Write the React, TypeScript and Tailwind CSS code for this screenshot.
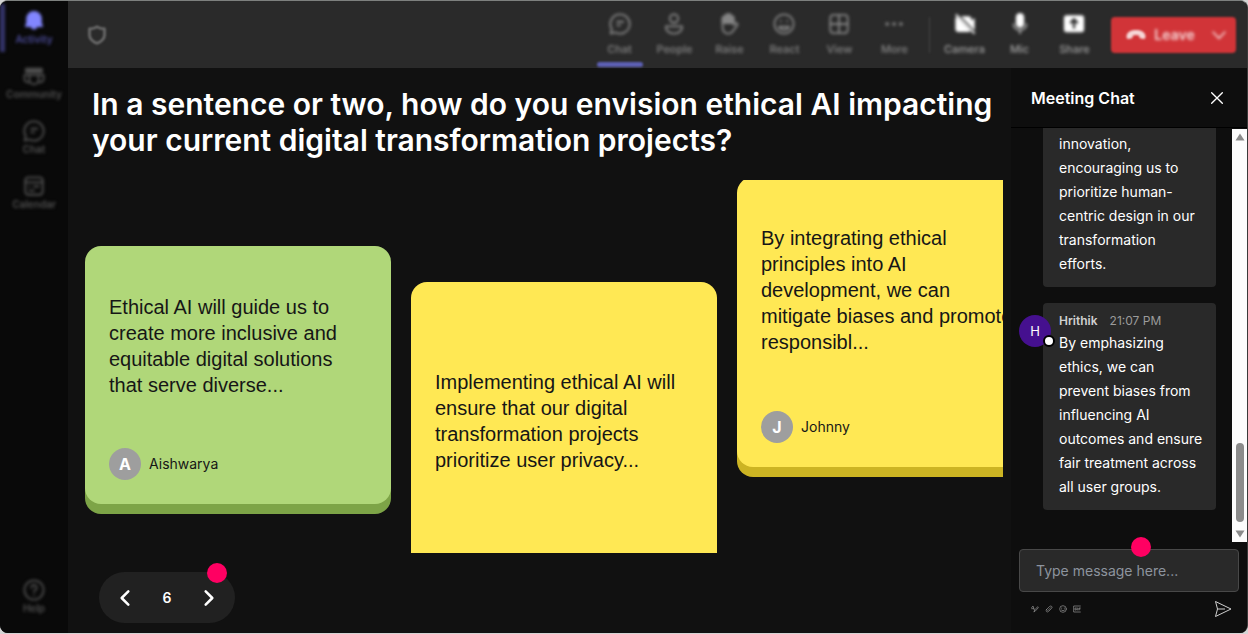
import type { ReactNode } from "react";

type Item = { label: string; icon: ReactNode; active?: boolean };

const Stroke = ({ children, className = "size-[22px]", width = 2 }: { children: ReactNode; className?: string; width?: number }) => (
  <svg
    viewBox="0 0 24 24"
    className={className}
    fill="none"
    stroke="currentColor"
    strokeWidth={width}
    strokeLinecap="round"
    strokeLinejoin="round"
    aria-hidden="true"
  >
    {children}
  </svg>
);

const chatIcon = (
  <Stroke>
    <path d="M12 1.500a10.500 10.500 0 1 1-5 19.700L1.800 22.500l1.200-5A10.500 10.500 0 0 1 12 1.500z" />
    <path d="M9 9.500h6.500M9 13.500h3" />
  </Stroke>
);

const sideItems: Item[] = [
  {
    label: "Activity",
    active: true,
    icon: (
      <svg viewBox="0 0 24 24" className="size-[22px]" fill="currentColor" aria-hidden="true">
        <path d="M12 1a8.500 8.500 0 0 0-8.500 8.500v4.500L2 18.500h6.500a3.600 3.600 0 0 0 7 0H22L20.500 14V9.500A8.500 8.500 0 0 0 12 1z" />
      </svg>
    ),
  },
  {
    label: "Community",
    icon: (
      <Stroke>
        <path d="M3 3.500h18v5H3z" fill="currentColor" strokeWidth="1" />
        <path d="M7 11h10v5a5 5 0 0 1-10 0zM7 11H1.500v4a4 4 0 0 0 5.500 3.700M17 11h5.500v4a4 4 0 0 1-5.500 3.700" />
      </Stroke>
    ),
  },
  { label: "Chat", icon: chatIcon },
  {
    label: "Calendar",
    icon: (
      <Stroke>
        <rect x="2.500" y="2.500" width="19" height="19" rx="3.500" />
        <path d="M2.500 8h19M7 12.500h.1M12 12.500h5M7 17h5" />
      </Stroke>
    ),
  },
];

const meetingItems: Item[] = [
  { label: "Chat", active: true, icon: chatIcon },
  {
    label: "People",
    icon: (
      <Stroke>
        <circle cx="12" cy="6" r="4.600" />
        <path d="M3 14.500h18c0 5-4 8-9 8s-9-3-9-8z" />
      </Stroke>
    ),
  },
  {
    label: "Raise",
    icon: (
      <Stroke>
        <path d="M5 13V5.500a1.500 1.500 0 0 1 3 0V3a1.500 1.500 0 0 1 3 0V2.500a1.500 1.500 0 0 1 3 0V5a1.500 1.500 0 0 1 3 0v8l2-2a1.700 1.700 0 0 1 2 2.500l-5 6.500c-3 4-11 3.500-11-5z" />
        <path d="M5 5.500L8 3l3-1.500L17 5v6H5z" fill="currentColor" />
      </Stroke>
    ),
  },
  {
    label: "React",
    icon: (
      <Stroke>
        <circle cx="12" cy="12" r="10.500" />
        <path d="M8.500 8.500v.5M15.500 8.500v.5M6.500 15h11c-1.500 4.500-9.500 4.500-11 0z" />
      </Stroke>
    ),
  },
  {
    label: "View",
    icon: (
      <Stroke>
        <rect x="2.500" y="2" width="19" height="20" rx="3.500" />
        <path d="M12 2v20M2.500 12h19" />
      </Stroke>
    ),
  },
  {
    label: "More",
    icon: (
      <Stroke width={4}>
        <path d="M4.500 12h.1M12 12h.1M19.500 12h.1" />
      </Stroke>
    ),
  },
];

const deviceItems: Item[] = [
  {
    label: "Camera",
    icon: (
      <svg viewBox="0 0 24 24" className="size-[22px]" fill="currentColor" aria-hidden="true">
        <path d="M3 4l15 15.500c-.7.900-1.400 1.200-2.500 1.200H5a3.500 3.500 0 0 1-3.500-3.500V7c0-1.400.5-2.300 1.500-3zM8 3.500h7.500A3.500 3.500 0 0 1 19 7v1.500l3.500-3v13.500L8 4z" />
        <path d="M2 1.500l20.500 21" stroke="currentColor" strokeWidth="2" />
      </svg>
    ),
  },
  {
    label: "Mic",
    icon: (
      <svg viewBox="0 0 24 24" className="size-[22px]" fill="currentColor" aria-hidden="true">
        <rect x="7.500" y="0" width="9" height="16" rx="4.500" />
        <path d="M5 11.500c0 9.500 14 9.500 14 0M12 19v4" fill="none" stroke="currentColor" strokeWidth="2" opacity="0.6" />
      </svg>
    ),
  },
  {
    label: "Share",
    icon: (
      <svg viewBox="0 0 24 24" className="size-[22px]" fill="currentColor" aria-hidden="true">
        <rect x="1" y="2.500" width="22" height="18.500" rx="3" />
        <path d="M12 17V7.500M8 11l4-4 4 4" fill="none" stroke="#2a2a2a" strokeWidth="2.500" />
      </svg>
    ),
  },
];

const notes = [
  {
    text: "Ethical AI will guide us to create more inclusive and equitable digital solutions that serve diverse...",
    author: "Aishwarya",
    className: "mt-[66px] min-h-[258px] bg-[#b0d779] shadow-[0_10px_0_#7da447]",
    textClass: "pt-12",
  },
  {
    text: "Implementing ethical AI will ensure that our digital transformation projects prioritize user privacy...",
    author: null,
    className: "mt-[102px] min-h-[290px] bg-[#ffe854] shadow-[0_10px_0_#ccb423]",
    textClass: "pt-[87px]",
  },
  {
    text: "By integrating ethical principles into AI development, we can mitigate biases and promote responsibl...",
    author: "Johnny",
    className: "-mt-[3px] min-h-[290px] bg-[#ffe854] shadow-[0_10px_0_#ccb423]",
    textClass: "pt-12",
  },
];

const Sidebar = () => (
  <nav className="flex w-[68px] shrink-0 flex-col justify-between bg-[#090909] pt-[7px] pb-[18px] text-[#505050]">
    <div className="flex flex-col blur-[1px]">
      {sideItems.map((item) => (
        <button
          key={item.label}
          type="button"
          className={`relative flex h-[55px] flex-col items-center pt-[2px] blur-[1px] ${item.active ? "text-[#8286ff]" : ""}`}
        >
          {item.active && <span className="absolute -top-1 left-0 h-12 w-[5px] bg-[#34346a]" />}
          {item.icon}
          <span className={`text-[10px] leading-[14px] font-semibold ${item.active ? "text-[#4b4b98]" : ""}`}>{item.label}</span>
        </button>
      ))}
    </div>
    <div className="flex flex-col blur-[1px]">
      <button type="button" className="flex flex-col items-center blur-[1px]">
        <Stroke>
          <circle cx="12" cy="12" r="10.500" />
          <path d="M9 9.500a3 3 0 1 1 4.500 2.700c-1 .5-1.500 1-1.500 2M12 17.500v.1" />
        </Stroke>
        <span className="text-[10px] leading-[14px] font-semibold">Help</span>
      </button>
    </div>
  </nav>
);

const ToolButton = ({ item, bright }: { item: Item; bright?: boolean }) => (
  <button
    type="button"
    className={`relative flex h-full w-[55px] flex-col items-center pt-3 ${bright ? "text-white" : "text-[#858585]"}`}
  >
    <span className="flex flex-col items-center gap-[6px] blur-[1px]">
      {item.icon}
      <span className={`text-[11px] leading-4 font-medium ${bright ? "text-[#a0a0a0]" : ""}`}>{item.label}</span>
    </span>
    {item.active && <span className="absolute bottom-px h-[5px] w-[46px] rounded-full bg-[#5d60b5]" />}
  </button>
);

const Toolbar = () => (
  <header className="h-[67px] shrink-0 bg-[#2a2a2a]">
    <div className="flex h-full items-center pr-[11px] pl-[19px] blur-[1px]">
      <Stroke className="size-5 text-[#707070]" width={3}>
        <path d="M12 2c3 2 6 2.500 9 2.500v7.500c0 5-4 8-9 10-5-2-9-5-9-10V4.500C6 4.500 9 4 12 2z" />
      </Stroke>
      <div className="ml-auto flex h-full">
        {meetingItems.map((item) => (
          <ToolButton key={item.label} item={item} />
        ))}
      </div>
      <span className="mx-[7px] h-9 w-px bg-[#444]" />
      <div className="flex h-full">
        {deviceItems.map((item) => (
          <ToolButton key={item.label} item={item} bright />
        ))}
      </div>
      <button type="button" className="ml-[9px] flex h-9 w-[125px] items-center justify-between rounded bg-[#d13438] pr-2 pl-[14px] text-white/80">
        <svg viewBox="0 0 24 24" className="size-[22px]" fill="currentColor" aria-hidden="true">
          <path d="M12 6.500c5 0 9.500 2 10.300 6 .3 2-.3 4-1.800 3.800l-3.400-.6c-1.300-.3-1.500-1.200-1.800-3.200-2-.8-4.600-.8-6.600 0-.3 2-.5 2.900-1.800 3.200l-3.400.6C2 16.500 1.400 14.500 1.700 12.500c.8-4 5.300-6 10.300-6z" />
        </svg>
        <span className="text-sm font-semibold blur-[1px]">Leave</span>
        <Stroke className="ml-2 size-[18px] blur-[1px]">
          <path d="M4 8l8 8.500L20 8" />
        </Stroke>
      </button>
    </div>
  </header>
);

const Board = () => (
  <main className="flex min-w-0 flex-1 flex-col pb-[10px]">
    <h1 className="pt-[18px] pr-3 pl-6 text-[30px] leading-9 font-semibold text-white">
      In a sentence or two, how do you envision ethical AI impacting your current digital transformation projects?
    </h1>
    <div className="mt-[22px] mr-2 ml-[17px] flex min-h-0 flex-1 items-start gap-5 overflow-hidden">
      {notes.map((note) => (
        <article
          key={note.text}
          className={`flex w-[306px] shrink-0 flex-col rounded-2xl px-6 pb-6 text-[#161616] ${note.className}`}
        >
          <p className={`font-['Liberation_Sans',Arial,sans-serif] text-xl leading-[26px] ${note.textClass}`}>{note.text}</p>
          {note.author && (
            <div className="mt-auto flex items-center gap-2">
              <span className="flex size-8 items-center justify-center rounded-full bg-[#9e9e9e] text-base font-bold text-white">
                {note.author[0]}
              </span>
              <span className="text-sm">{note.author}</span>
            </div>
          )}
        </article>
      ))}
    </div>
    <div className="relative mt-[19px] ml-[31px] flex h-[51px] w-[136px] shrink-0 items-center justify-between rounded-full bg-[#212121] px-4 text-white">
      <button type="button" aria-label="Previous">
        <Stroke className="size-5" width={3}>
          <path d="M16 4L8 12l8 8" />
        </Stroke>
      </button>
      <span className="text-sm font-semibold">6</span>
      <button type="button" aria-label="Next">
        <Stroke className="size-5" width={3}>
          <path d="M8 4l8 8-8 8" />
        </Stroke>
      </button>
      <span className="absolute -top-[9px] right-2 size-5 rounded-full bg-[#ff0062]" />
    </div>
  </main>
);

const Composer = () => (
  <form className="relative px-2 pt-[7px] pb-[15px]">
    <input
      type="text"
      aria-label="Message"
      placeholder="Type message here..."
      className="h-[43px] w-full rounded border border-[#484848] bg-[#292929] px-4 text-sm text-white outline-none placeholder:text-[#8d949e]"
    />
    <span className="absolute -top-[5px] left-30 size-5 rounded-full bg-[#ff0062]" />
    <div className="mt-2 flex items-center justify-between pr-[7px] pl-3">
      <div className="flex gap-[6px] text-[#9a9a9a]">
        <button type="button" aria-label="Format">
          <Stroke className="size-2">
            <path d="M2 8l4-5 4 12M2 11h6M9 20l3-6 8-9 2 3-8 9z" />
          </Stroke>
        </button>
        <button type="button" aria-label="Attach">
          <Stroke className="size-2">
            <path d="M8 17l9-9M5 13l8-8c5-5 11 1 7 5l-9 9c-5 5-11-1-6-6z" />
          </Stroke>
        </button>
        <button type="button" aria-label="Emoji">
          <Stroke className="size-2">
            <circle cx="12" cy="12" r="10" />
            <path d="M8 9v1M16 9v1M7 15c2 3 8 3 10 0" />
          </Stroke>
        </button>
        <button type="button" aria-label="GIF">
          <Stroke className="size-2">
            <path d="M22 3H2v18h20M10 9H6v6h4v-3M14 9v6M22 9h-4v6M18 12h3" />
          </Stroke>
        </button>
      </div>
      <button type="submit" aria-label="Send" className="text-[#d0d0d0]">
        <svg viewBox="0 0 18 18" className="size-[18px]" fill="none" stroke="currentColor" strokeLinejoin="round" aria-hidden="true">
          <path d="M1.500 1.500L17 9 1.500 16.500 3.500 9zM3.500 9H11" />
        </svg>
      </button>
    </div>
  </form>
);

const ChatPanel = () => (
  <aside className="flex w-[236px] shrink-0 flex-col bg-[#0e0e0e] text-white">
    <div className="flex h-[60px] shrink-0 items-center justify-between border-b border-black pt-px pr-[22px] pl-5">
      <h2 className="text-base font-semibold">Meeting Chat</h2>
      <button type="button" aria-label="Close">
        <Stroke className="size-4">
          <path d="M4 4l16 16M20 4L4 20" />
        </Stroke>
      </button>
    </div>
    <div className="flex min-h-0 flex-1">
      <div className="flex flex-1 flex-col justify-end gap-4 overflow-hidden pr-4 pb-8 pl-8 text-sm leading-6">
        <div className="rounded bg-[#292929] pt-3 pr-3 pb-[11px] pl-4">
          innovation, encouraging us to prioritize human-centric design in our transformation efforts.
        </div>
        <div className="relative rounded bg-[#292929] pt-2 pr-3 pb-[11px] pl-4">
          <span className="absolute top-3 -left-6 flex size-8 items-center justify-center rounded-full bg-[#45108f] text-[13px]">
            H
            <span className="absolute -right-1 bottom-0 size-3 rounded-full border-2 border-black bg-white" />
          </span>
          <div className="flex gap-3 text-xs leading-5 text-[#9b9b9b]">
            <span className="font-semibold text-[#d0d0d0]">Hrithik</span>
            <span>21:07 PM</span>
          </div>
          By emphasizing ethics, we can prevent biases from influencing AI outcomes and ensure fair treatment across all user groups.
        </div>
      </div>
      <div className="mt-px flex w-[15px] shrink-0 flex-col items-center bg-[#fcfcfc] py-1 text-[#8b8b8b]" aria-hidden="true">
        <svg viewBox="0 0 10 8" className="h-2 w-[10px]" fill="currentColor">
          <path d="M5 0.500L9.500 7.500h-9z" />
        </svg>
        <span className="mt-auto mb-2 h-[79px] w-2 rounded-full bg-current" />
        <svg viewBox="0 0 10 8" className="h-2 w-[10px]" fill="currentColor">
          <path d="M5 7.500L0.500 0.500h9z" />
        </svg>
      </div>
    </div>
    <Composer />
  </aside>
);

export default function App() {
  return (
    <div className="h-screen bg-[#d4d4d4] pb-px font-['Inter',sans-serif]">
      <div className="flex h-full overflow-hidden rounded-lg border-t border-r border-t-[#7d807e] border-r-[#3a3a3a] bg-[#111]">
        <Sidebar />
        <div className="flex min-w-0 flex-1 flex-col">
          <Toolbar />
          <div className="flex min-h-0 flex-1">
            <Board />
            <ChatPanel />
          </div>
        </div>
      </div>
    </div>
  );
}
